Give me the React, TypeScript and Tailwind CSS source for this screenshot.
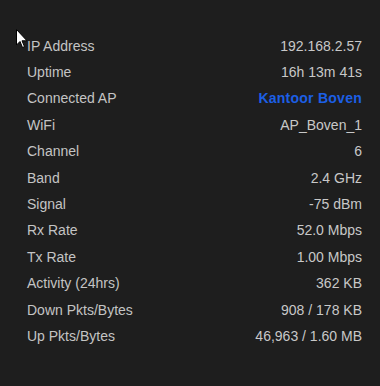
import React from "react";

const rows: { label: string; value: string; link?: boolean }[] = [
  { label: "IP Address", value: "192.168.2.57" },
  { label: "Uptime", value: "16h 13m 41s" },
  { label: "Connected AP", value: "Kantoor Boven", link: true },
  { label: "WiFi", value: "AP_Boven_1" },
  { label: "Channel", value: "6" },
  { label: "Band", value: "2.4 GHz" },
  { label: "Signal", value: "-75 dBm" },
  { label: "Rx Rate", value: "52.0 Mbps" },
  { label: "Tx Rate", value: "1.00 Mbps" },
  { label: "Activity (24hrs)", value: "362 KB" },
  { label: "Down Pkts/Bytes", value: "908 / 178 KB" },
  { label: "Up Pkts/Bytes", value: "46,963 / 1.60 MB" },
];

function Cursor() {
  return (
    <svg
      className="absolute left-[16px] top-[29px]"
      width="13"
      height="20"
      viewBox="0 0 13 20"
    >
      <path
        d="M0.5 0.5 L0.5 16 L4 12.5 L6.5 18.5 L8.5 17.6 L6 11.8 L11 11.8 Z"
        fill="#ffffff"
        stroke="#000000"
        strokeWidth="1"
      />
    </svg>
  );
}

export default function App() {
  return (
    <div className="relative w-[380px] h-[386px] bg-[#1e1e1e] font-['Liberation_Sans',Arial,sans-serif] text-[14px]">
      <div className="flex flex-col pt-[33px] pl-[27px] pr-[18px]">
        {rows.map((row) => (
          <div key={row.label} className="flex h-[26.4px] items-center justify-between">
            <span className="text-[#c4c4c4]">{row.label}</span>
            {row.link ? (
              <span className="font-bold tracking-[0.25px] text-[#1c5fe5]">{row.value}</span>
            ) : (
              <span className="text-[#c8c8c8]">{row.value}</span>
            )}
          </div>
        ))}
      </div>
      <Cursor />
    </div>
  );
}
